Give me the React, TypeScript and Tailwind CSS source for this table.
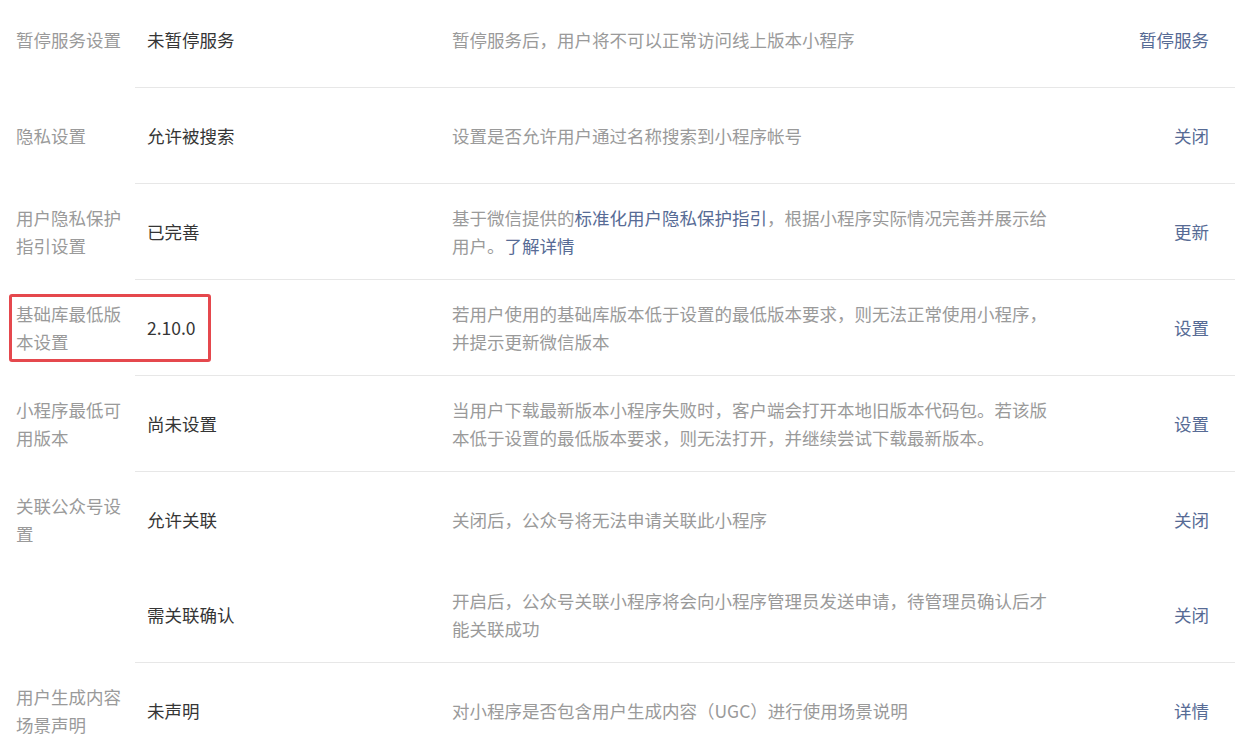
import React from "react";

type Sub = { value: string; desc: React.ReactNode; action: string };
type Group = { label: string; subs: Sub[]; highlight?: boolean };

const L = ({ children }: { children: React.ReactNode }) => (
  <span className="text-[#576b95]">{children}</span>
);

const groups: Group[] = [
  {
    label: "暂停服务设置",
    subs: [
      {
        value: "未暂停服务",
        desc: "暂停服务后，用户将不可以正常访问线上版本小程序",
        action: "暂停服务",
      },
    ],
  },
  {
    label: "隐私设置",
    subs: [
      {
        value: "允许被搜索",
        desc: "设置是否允许用户通过名称搜索到小程序帐号",
        action: "关闭",
      },
    ],
  },
  {
    label: "用户隐私保护指引设置",
    subs: [
      {
        value: "已完善",
        desc: (
          <>
            基于微信提供的<L>标准化用户隐私保护指引</L>，根据小程序实际情况完善并展示给用户。<L>了解详情</L>
          </>
        ),
        action: "更新",
      },
    ],
  },
  {
    label: "基础库最低版本设置",
    highlight: true,
    subs: [
      {
        value: "2.10.0",
        desc: "若用户使用的基础库版本低于设置的最低版本要求，则无法正常使用小程序，并提示更新微信版本",
        action: "设置",
      },
    ],
  },
  {
    label: "小程序最低可用版本",
    subs: [
      {
        value: "尚未设置",
        desc: "当用户下载最新版本小程序失败时，客户端会打开本地旧版本代码包。若该版本低于设置的最低版本要求，则无法打开，并继续尝试下载最新版本。",
        action: "设置",
      },
    ],
  },
  {
    label: "关联公众号设置",
    subs: [
      {
        value: "允许关联",
        desc: "关闭后，公众号将无法申请关联此小程序",
        action: "关闭",
      },
      {
        value: "需关联确认",
        desc: "开启后，公众号关联小程序将会向小程序管理员发送申请，待管理员确认后才能关联成功",
        action: "关闭",
      },
    ],
  },
  {
    label: "用户生成内容场景声明",
    subs: [
      {
        value: "未声明",
        desc: "对小程序是否包含用户生成内容（UGC）进行使用场景说明",
        action: "详情",
      },
    ],
  },
];

export default function App() {
  return (
    <div
      className="w-[1242px] h-[748px] overflow-hidden bg-white text-[17.5px] leading-[28px]"
      style={{ fontFamily: '"Noto Sans CJK SC", "Noto Sans", sans-serif' }}
    >
      <div className="-mt-[8px] pr-[7px]">
        {groups.map((g, gi) => (
          <div key={gi} className="flex relative">
            {g.highlight && (
              <div className="absolute left-[9px] top-[14px] w-[202px] h-[68px] border-[3px] border-[#e5484d] rounded-[3px] pointer-events-none" />
            )}
            <div className="w-[135px] shrink-0 pl-4 pr-2 h-[96px] flex items-center text-[#9a9a9a]">
              <div className="w-[110px]">{g.label}</div>
            </div>
            <div className="flex-1 border-b border-[#e7e7e7]">
              {g.subs.map((s, si) => (
                <div key={si} className="flex items-center h-[95px]">
                  <div className="w-[317px] shrink-0 pl-3 text-[#353535]">{s.value}</div>
                  <div className="w-[605px] shrink-0 text-[#9a9a9a]">{s.desc}</div>
                  <div className="flex-1 text-right pr-[26px] text-[#576b95]">{s.action}</div>
                </div>
              ))}
            </div>
          </div>
        ))}
      </div>
    </div>
  );
}
